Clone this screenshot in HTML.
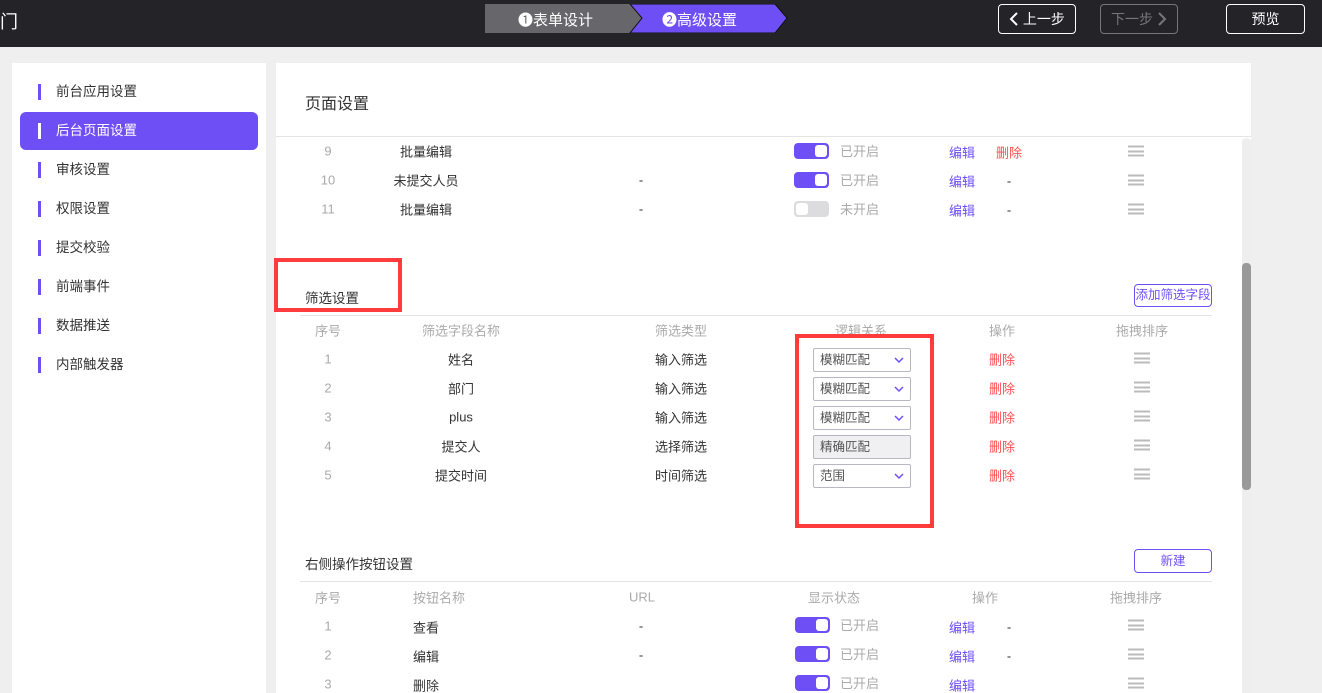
<!DOCTYPE html>
<html><head><meta charset="utf-8"><style>
*{margin:0;padding:0;box-sizing:border-box}
body{width:1322px;height:684px;overflow:hidden;background:#efefef;font-family:"Liberation Sans","Noto Sans CJK SC",sans-serif;font-size:13px;color:#333;position:relative}
.a{position:absolute;white-space:nowrap}
.top{position:absolute;left:0;top:0;width:1322px;height:47px;background:#232328}
.btn{position:absolute;border:1px solid #fff;border-radius:4px;color:#fff;font-size:14px;text-align:center;line-height:28px;height:30px}
.btn svg{vertical-align:-2px}
.side{position:absolute;left:12px;top:63px;width:254px;height:630px;background:#fff}
.mi{position:absolute;left:8px;width:238px;height:38px;line-height:38px;padding-left:36px;font-size:13.5px;color:#333;border-radius:6px}
.mi:before{content:"";position:absolute;left:18px;top:11px;width:3px;height:16px;background:#6e4ff6}
.mi.on{background:#6e4ff6;color:#fff}.mi.on:before{background:#fff}
.main{position:absolute;left:276px;top:63px;width:975px;height:630px;background:#fff;overflow:hidden}
.c{position:absolute;transform:translate(-50%,-50%);white-space:nowrap}
.g{color:#aaa}.p{color:#6e4ff6}.r{color:#ff4d4f}
.tg{position:absolute;width:35px;height:16px;border-radius:4px;background:#6e4ff6;transform:translateY(-50%)}
.tg:after{content:"";position:absolute;right:2px;top:2px;width:12px;height:12px;border-radius:3px;background:#fff}
.tg.off{background:#dcdcdf}.tg.off:after{right:auto;left:2px}
.hb{position:absolute;width:16px;height:11px;transform:translate(-50%,-50%);border-top:2px solid #bbb;border-bottom:2px solid #bbb}
.hb:after{content:"";position:absolute;left:0;right:0;top:2.5px;border-top:2px solid #bbb}
.sel{position:absolute;left:537px;width:98px;height:24px;border:1px solid #b8b8c4;border-radius:2px;padding-left:6px;line-height:22px;color:#555;font-size:12.5px;transform:translateY(-50%)}
.sel svg{position:absolute;right:6px;top:8px}
.line{position:absolute;left:24px;width:912px;border-top:1px solid #e4e4e8}
.rb{position:absolute;border:4px solid #ff3b3b}
</style></head><body>
<div class="top">
<div class="a" style="left:0;top:8px;color:#fff;font-size:18px">门</div>
<svg class="a" style="left:485px;top:4px" width="305" height="29"><polygon points="0,0 145,0 157,14 145,29 0,29" fill="#67666b"/><polygon points="145,0 290,0 302,14 290,29 145,29 157,14" fill="#6e4ff6" stroke="#111" stroke-width="1"/></svg>
<div class="a" style="left:518px;top:9px;color:#fff;font-size:15px">❶表单设计</div>
<div class="a" style="left:662px;top:9px;color:#fff;font-size:15px">❷高级设置</div>
<div class="btn" style="left:998px;top:4px;width:78px"><svg width="10" height="14"><path d="M8 1L2 7l6 6" fill="none" stroke="#fff" stroke-width="2"/></svg> 上一步</div>
<div class="btn" style="left:1100px;top:4px;width:78px;border-color:#777;color:#777">下一步 <svg width="10" height="14"><path d="M2 1l6 6-6 6" fill="none" stroke="#777" stroke-width="2"/></svg></div>
<div class="btn" style="left:1226px;top:4px;width:79px">预览</div>
</div>
<div class="side">
<div class="mi" style="top:10px">前台应用设置</div>
<div class="mi on" style="top:49px">后台页面设置</div>
<div class="mi" style="top:88px">审核设置</div>
<div class="mi" style="top:127px">权限设置</div>
<div class="mi" style="top:166px">提交校验</div>
<div class="mi" style="top:205px">前端事件</div>
<div class="mi" style="top:244px">数据推送</div>
<div class="mi" style="top:283px">内部触发器</div>
</div>
<div class="main">
<div class="a" style="left:29px;top:27px;font-size:16px;color:#333">页面设置</div>
<div style="position:absolute;left:0;top:73px;width:975px;border-top:1px solid #e4e4e8"></div>
<div style="position:absolute;left:966px;top:75px;width:9px;height:560px;background:#eee;border-radius:4px"></div>
<div style="position:absolute;left:966px;top:200px;width:9px;height:227px;background:#999;border-radius:4px"></div>

<div class="c g" style="left:52px;top:88px">9</div><div class="c" style="left:150px;top:88px">批量编辑</div>
<div class="tg" style="left:518px;top:88px"></div><div class="a g" style="left:564px;top:78px">已开启</div>
<div class="c p" style="left:686px;top:89px">编辑</div><div class="c r" style="left:733px;top:89px">删除</div><div class="hb" style="left:860px;top:88px"></div>

<div class="c g" style="left:52px;top:117px">10</div><div class="c" style="left:150px;top:117px">未提交人员</div><div class="c" style="left:365px;top:117px">-</div>
<div class="tg" style="left:518px;top:117px"></div><div class="a g" style="left:564px;top:107px">已开启</div>
<div class="c p" style="left:686px;top:118px">编辑</div><div class="c" style="left:733px;top:118px">-</div><div class="hb" style="left:860px;top:117px"></div>

<div class="c g" style="left:52px;top:146px">11</div><div class="c" style="left:150px;top:146px">批量编辑</div><div class="c" style="left:365px;top:146px">-</div>
<div class="tg off" style="left:518px;top:146px"></div><div class="a g" style="left:564px;top:136px">未开启</div>
<div class="c p" style="left:686px;top:147px">编辑</div><div class="c" style="left:733px;top:147px">-</div><div class="hb" style="left:860px;top:146px"></div>

<div class="a" style="left:29px;top:224px;font-size:13.5px">筛选设置</div>
<div class="a p" style="left:858px;top:221px;width:78px;height:23px;border:1px solid #6e4ff6;border-radius:4px;text-align:center;line-height:21px;font-size:12.5px">添加筛选字段</div>
<div class="line" style="top:252px"></div>
<div class="c g" style="left:52px;top:267px">序号</div><div class="c g" style="left:185px;top:267px">筛选字段名称</div><div class="c g" style="left:405px;top:267px">筛选类型</div><div class="c g" style="left:585px;top:267px">逻辑关系</div><div class="c g" style="left:726px;top:267px">操作</div><div class="c g" style="left:866px;top:267px">拖拽排序</div>

<div class="c g" style="left:52px;top:296px">1</div><div class="c" style="left:185px;top:296px">姓名</div><div class="c" style="left:405px;top:296px">输入筛选</div>
<div class="sel" style="top:297px">模糊匹配<svg width="10" height="7"><path d="M1 1l4 4 4-4" fill="none" stroke="#6e4ff6" stroke-width="1.5"/></svg></div>
<div class="c r" style="left:726px;top:296px">删除</div><div class="hb" style="left:866px;top:295px"></div>

<div class="c g" style="left:52px;top:325px">2</div><div class="c" style="left:185px;top:325px">部门</div><div class="c" style="left:405px;top:325px">输入筛选</div>
<div class="sel" style="top:326px">模糊匹配<svg width="10" height="7"><path d="M1 1l4 4 4-4" fill="none" stroke="#6e4ff6" stroke-width="1.5"/></svg></div>
<div class="c r" style="left:726px;top:325px">删除</div><div class="hb" style="left:866px;top:324px"></div>

<div class="c g" style="left:52px;top:354px">3</div><div class="c" style="left:185px;top:354px">plus</div><div class="c" style="left:405px;top:354px">输入筛选</div>
<div class="sel" style="top:355px">模糊匹配<svg width="10" height="7"><path d="M1 1l4 4 4-4" fill="none" stroke="#6e4ff6" stroke-width="1.5"/></svg></div>
<div class="c r" style="left:726px;top:354px">删除</div><div class="hb" style="left:866px;top:353px"></div>

<div class="c g" style="left:52px;top:383px">4</div><div class="c" style="left:185px;top:383px">提交人</div><div class="c" style="left:405px;top:383px">选择筛选</div>
<div class="sel" style="top:384px;background:#f0f0f3">精确匹配</div>
<div class="c r" style="left:726px;top:383px">删除</div><div class="hb" style="left:866px;top:382px"></div>

<div class="c g" style="left:52px;top:412px">5</div><div class="c" style="left:185px;top:412px">提交时间</div><div class="c" style="left:405px;top:412px">时间筛选</div>
<div class="sel" style="top:413px">范围<svg width="10" height="7"><path d="M1 1l4 4 4-4" fill="none" stroke="#6e4ff6" stroke-width="1.5"/></svg></div>
<div class="c r" style="left:726px;top:412px">删除</div><div class="hb" style="left:866px;top:411px"></div>

<div class="a" style="left:29px;top:490px;font-size:13.5px">右侧操作按钮设置</div>
<div class="a p" style="left:858px;top:486px;width:78px;height:24px;border:1px solid #6e4ff6;border-radius:4px;text-align:center;line-height:22px;font-size:12.5px">新建</div>
<div class="line" style="top:518px"></div>
<div class="c g" style="left:52px;top:534px">序号</div><div class="c g" style="left:163px;top:534px">按钮名称</div><div class="c g" style="left:366px;top:534px">URL</div><div class="c g" style="left:558px;top:534px">显示状态</div><div class="c g" style="left:709px;top:534px">操作</div><div class="c g" style="left:860px;top:534px">拖拽排序</div>

<div class="c g" style="left:52px;top:563px">1</div><div class="c" style="left:150px;top:564px">查看</div><div class="c" style="left:365px;top:563px">-</div>
<div class="tg" style="left:519px;top:562px"></div><div class="a g" style="left:564px;top:552px">已开启</div>
<div class="c p" style="left:686px;top:564px">编辑</div><div class="c" style="left:733px;top:564px">-</div><div class="hb" style="left:860px;top:562px"></div>

<div class="c g" style="left:52px;top:592px">2</div><div class="c" style="left:150px;top:593px">编辑</div><div class="c" style="left:365px;top:592px">-</div>
<div class="tg" style="left:519px;top:591px"></div><div class="a g" style="left:564px;top:581px">已开启</div>
<div class="c p" style="left:686px;top:593px">编辑</div><div class="c" style="left:733px;top:593px">-</div><div class="hb" style="left:860px;top:591px"></div>

<div class="c g" style="left:52px;top:621px">3</div><div class="c" style="left:150px;top:622px">删除</div>
<div class="tg" style="left:519px;top:620px"></div><div class="a g" style="left:564px;top:610px">已开启</div>
<div class="c p" style="left:686px;top:622px">编辑</div><div class="hb" style="left:860px;top:620px"></div>
</div>
<div class="rb" style="left:274px;top:258px;width:128px;height:54px"></div>
<div class="rb" style="left:795px;top:334px;width:139px;height:194px"></div>
</body></html>
